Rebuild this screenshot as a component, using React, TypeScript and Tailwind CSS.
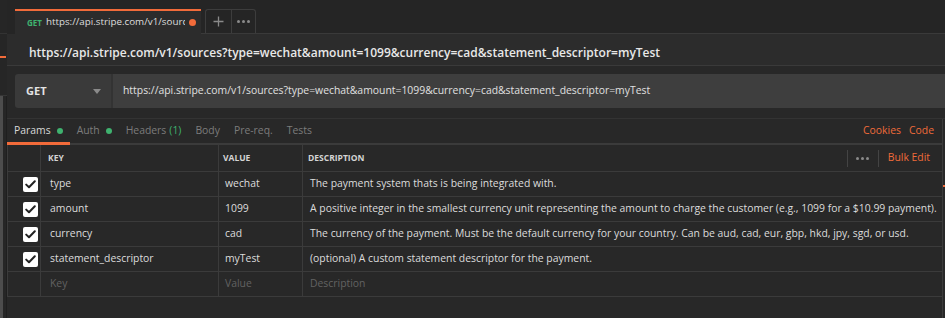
import React from "react";

const ROWS = [
  { key: "type", value: "wechat", desc: "The payment system thats is being integrated with." },
  {
    key: "amount",
    value: "1099",
    desc: "A positive integer in the smallest currency unit representing the amount to charge the customer (e.g., 1099 for a $10.99 payment).",
  },
  {
    key: "currency",
    value: "cad",
    desc: "The currency of the payment. Must be the default currency for your country. Can be aud, cad, eur, gbp, hkd, jpy, sgd, or usd.",
  },
  { key: "statement_descriptor", value: "myTest", desc: "(optional) A custom statement descriptor for the payment." },
];

const URL = "https://api.stripe.com/v1/sources?type=wechat&amount=1099&currency=cad&statement_descriptor=myTest";

const TABS = [
  { label: "Params", active: true, dot: true },
  { label: "Auth", dot: true },
  { label: "Headers", count: "(1)" },
  { label: "Body" },
  { label: "Pre-req." },
  { label: "Tests" },
];

function Check() {
  return (
    <div className="w-[15px] h-[15px] bg-white rounded-[2px] flex items-center justify-center">
      <svg width="11" height="9" viewBox="0 0 11 9" fill="none">
        <path d="M1.2 4.6 L4 7.3 L9.8 1.3" stroke="#222" strokeWidth="2" strokeLinecap="round" strokeLinejoin="round" />
      </svg>
    </div>
  );
}

function Dots() {
  return (
    <>
      <span className="w-[3px] h-[3px] rounded-full bg-[#8a8a8a]" />
      <span className="w-[3px] h-[3px] rounded-full bg-[#8a8a8a]" />
      <span className="w-[3px] h-[3px] rounded-full bg-[#8a8a8a]" />
    </>
  );
}

function Row({ k, v, d, placeholder }: { k: string; v: string; d: string; placeholder?: boolean }) {
  const txt = placeholder ? "text-[#626262]" : "text-[#dcdcdc]";
  return (
    <div className="flex h-[25px] border-b border-[#3b3b3b]">
      <div className="w-[33px] shrink-0 border-r border-[#3b3b3b] flex items-center justify-end pr-[2px]">
        {!placeholder && <Check />}
      </div>
      <div className={`w-[178px] shrink-0 border-r border-[#3b3b3b] flex items-center pl-[9px] ${txt}`}>{k}</div>
      <div className={`w-[84px] shrink-0 border-r border-[#3b3b3b] flex items-center pl-[6px] ${txt}`}>{v}</div>
      <div className={`flex-1 min-w-0 flex items-center pl-[7px] whitespace-nowrap overflow-hidden ${txt}`}>{d}</div>
    </div>
  );
}

export default function App() {
  return (
    <div className="w-[945px] h-[318px] bg-[#282828] flex overflow-hidden font-['Open_Sans',sans-serif] text-[10.4px]">
      {/* left sidebar edge */}
      <div className="w-[7px] shrink-0 flex flex-col bg-[#262626]">
        <div className="h-[34px] border-b border-[#333]" />
        <div className="h-[22px]" />
        <div className="h-[2px] w-[6px] bg-[#f26b3a]" />
        <div className="h-[38px] border-b border-[#363636]" />
        <div className="flex-1 flex">
          <div className="w-[3px] bg-[#4d4d4d]" />
          <div className="flex-1 border-r border-[#1f1f1f]" />
        </div>
      </div>

      <div className="flex-1 min-w-0 flex flex-col">
        {/* tab bar */}
        <div className="h-[34px] shrink-0 bg-[#252525] flex items-end pl-[8px]">
          <div className="w-[186px] h-[25px] bg-[#2c2c2c] border-t-2 border-[#f26b3a] flex items-center pl-[12px] pr-[5px]">
            <span className="text-[8px] font-bold text-[#3fb26f] mr-[4px]">GET</span>
            <span className="text-[9.8px] text-[#dedede] whitespace-nowrap overflow-hidden flex-1">{URL}</span>
            <span className="w-[7px] h-[7px] rounded-full bg-[#f26b3a] ml-[4px] shrink-0" />
          </div>
          <div className="flex-1 h-[25px] flex items-stretch border-b border-[#3a3a3a] pl-[4px]">
            <div className="w-[26px] border-l border-t border-[#3d3d3d] rounded-tl-[3px] flex items-center justify-center">
              <svg width="11" height="11" viewBox="0 0 11 11">
                <path d="M5.5 0.5 V10.5 M0.5 5.5 H10.5" stroke="#8a8a8a" strokeWidth="1.3" />
              </svg>
            </div>
            <div className="w-[25px] border-l border-t border-r border-[#3d3d3d] rounded-tr-[3px] flex items-center justify-center gap-[2px]">
              <Dots />
            </div>
          </div>
        </div>

        {/* title */}
        <div className="h-[32px] shrink-0 bg-[#2c2c2c] border-b border-[#3a3a3a] flex items-center pl-[22px] pt-[6px] text-[12px] font-semibold text-[#e8e8e8] whitespace-nowrap">
          {URL}
        </div>

        {/* request bar */}
        <div className="mt-[8px] h-[34px] shrink-0 flex ml-[8px]">
          <div className="w-[98px] bg-[#3a3a3a] rounded-l-[3px] flex items-center pl-[11px] pr-[10px] justify-between border-r-2 border-[#333]">
            <span className="font-bold text-[11px] text-[#e4e4e4]">GET</span>
            <svg width="8" height="5" viewBox="0 0 8 5">
              <path d="M0 0 H8 L4 5 Z" fill="#8a8a8a" />
            </svg>
          </div>
          <div className="flex-1 bg-[#3e3e3e] flex items-center pl-[10px] text-[#e0e0e0] whitespace-nowrap overflow-hidden">
            {URL}
          </div>
        </div>

        {/* lower section */}
        <div className="mt-[10px] flex-1 min-h-0 flex border-t border-[#333]">
          <div className="flex-1 min-w-0 flex flex-col border-r border-[#3b3b3b]">
            <div className="h-[26px] shrink-0 flex items-stretch border-b-2 border-[#3b3b3b]">
              {TABS.map((t) => (
                <div
                  key={t.label}
                  className={`relative flex items-center px-[7px] ${t.active ? "text-[#d8d8d8]" : "text-[#7c7c7c]"}`}
                >
                  <span>{t.label}</span>
                  {t.count && <span className="ml-[3px] text-[#3fb26f]">{t.count}</span>}
                  {t.dot && <span className="ml-[6px] w-[6px] h-[6px] rounded-full bg-[#3fb26f]" />}
                  {t.active && <span className="absolute left-0 right-0 bottom-[-2px] h-[3px] bg-[#f26b3a]" />}
                </div>
              ))}
              <div className="flex-1" />
              <div className="flex items-center gap-[8px] pr-[8px] text-[#ef6b3a]">
                <span>Cookies</span>
                <span>Code</span>
              </div>
            </div>

            {/* table */}
            <div className="flex flex-col border-l border-[#3b3b3b]">
              <div className="flex h-[27px] border-b border-[#3b3b3b] text-[8.5px] font-bold text-[#d4d4d4]">
                <div className="w-[33px] shrink-0 border-r border-[#3b3b3b]" />
                <div className="w-[178px] shrink-0 border-r border-[#3b3b3b] flex items-center pl-[7px]">KEY</div>
                <div className="w-[84px] shrink-0 border-r border-[#3b3b3b] flex items-center pl-[4px]">VALUE</div>
                <div className="flex-1 min-w-0 flex items-center pl-[5px]">
                  <span className="flex-1">DESCRIPTION</span>
                  <div className="h-[17px] border-l border-[#444] w-[31px] flex items-center justify-center gap-[2px]">
                    <Dots />
                  </div>
                  <div className="h-[17px] border-l border-[#444] flex items-center pl-[9px] pr-[12px] text-[10.4px] font-normal text-[#ef6b3a]">
                    Bulk Edit
                  </div>
                </div>
              </div>
              {ROWS.map((r) => (
                <Row key={r.key} k={r.key} v={r.value} d={r.desc} />
              ))}
              <Row k="Key" v="Value" d="Description" placeholder />
            </div>
          </div>
          <div className="w-[2px] shrink-0 flex flex-col">
            <div className="h-[66px]" />
            <div className="h-[2px] bg-[#f26b3a]" />
          </div>
        </div>
      </div>
    </div>
  );
}
